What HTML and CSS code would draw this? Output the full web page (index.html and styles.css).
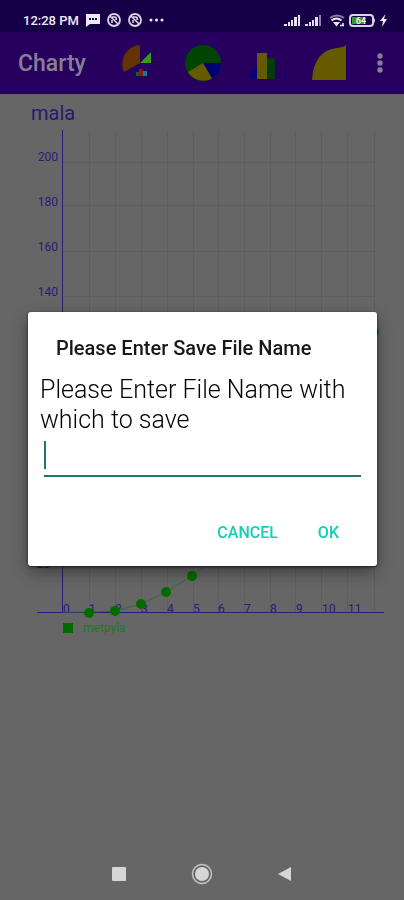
FILE: index.html
```
<!DOCTYPE html>
<html lang="en">
    <head>
        <meta charset="UTF-8">
        <meta name="viewport" content="width=device-width, initial-scale=1.0">
        <title>Charty</title>
        <link rel="stylesheet" href="styles.css">
    </head>
    <body>
        <div class="status-bar">
            <span class="clock">12:28 PM</span>
            <svg width="14" height="14" viewBox="0 0 14 14">
                <path d="M0 1h14v10H4l-4 3z" fill="#eeeaf5"/>
                <path d="M3 5h2v2H3zM6 5h2v2H6zM9 5h2v2H9z" fill="#160048"/>
            </svg>
            <svg width="14" height="14" viewBox="0 0 14 14" fill="none" stroke="#d9d3e8">
                <circle cx="7" cy="7" r="6" stroke-width="1.800"/>
                <path d="M3 3l8 8M5 10V7M5 4h3q2 1 1 3" stroke-width="1.600"/>
            </svg>
            <svg width="14" height="14" viewBox="0 0 14 14" fill="none" stroke="#d9d3e8">
                <circle cx="7" cy="7" r="6" stroke-width="1.800"/>
                <path d="M3 3l8 8M5 10V7M5 4h3q2 1 1 3" stroke-width="1.600"/>
            </svg>
            <svg width="15" height="14" viewBox="0 0 15 14" fill="#eeeaf5">
                <circle cx="2" cy="7" r="1.500"/>
                <circle cx="7.500" cy="7" r="1.500"/>
                <circle cx="13" cy="7" r="1.500"/>
            </svg>
            <div class="status-right">
                <svg width="17" height="13" viewBox="0 0 17 13" fill="#e4dff0">
                    <path d="M0 10h3v2H0zM4 8h2v4H4zM7 6h2v6H7zM10 3h3v9h-3zM14 1h2v11h-2z"/>
                </svg>
                <svg width="17" height="13" viewBox="0 0 17 13" fill="#e4dff0">
                    <path d="M0 10h3v2H0zM4 8h2v4H4zM7 6h2v6H7zM10 3h3v9h-3z"/>
                    <path d="M14 1h2v11h-2z" fill="#8d7fa8"/>
                </svg>
                <svg class="wifi" width="16" height="13" viewBox="0 0 16 13" fill="none" stroke="#eeeaf5">
                    <path d="M1 4q7-5 14 0" stroke="#8d7fa8" stroke-width="2"/>
                    <path d="M2.500 6.500q5-4 10 0" stroke-width="2"/>
                    <path d="M4 8h7l-3.500 4.500z" fill="#eeeaf5" stroke="none"/>
                    <path d="M11 11.500h4M14 9v3" stroke-width="1.500"/>
                </svg>
                <svg width="27" height="13" viewBox="0 0 27 13">
                    <rect x="1" y="1" width="23" height="11" rx="3" fill="none" stroke="#d9d3e8" stroke-width="2"/>
                    <path d="M25 4q2 2.500 0 5z" fill="#d9d3e8"/>
                    <rect x="3" y="3" width="13" height="7" fill="#379b20"/>
                    <text class="battery-text" x="12" y="10">64</text>
                </svg>
                <svg width="7" height="13" viewBox="0 0 7 13" fill="#eeeaf5">
                    <path d="M5.500 0L0 7h3l-1 6 5-8H4z"/>
                </svg>
            </div>
        </div>
        <header class="toolbar">
            <h1 class="app-name">Charty</h1>
            <div class="actions">
                <button class="action" aria-label="All charts">
                    <svg width="36" height="36" viewBox="0 0 36 36">
                        <path d="M18 0A19 19 0 0 0 2 27L18 18z" fill="#653300"/>
                        <path d="M18 18L29 7V18z" fill="#349b17"/>
                        <path d="M14 27h4v4h-4z" fill="#0c681f"/>
                        <path d="M17 24h4v7h-4z" fill="#8f1717"/>
                        <path d="M21 26h4v5h-4z" fill="#157a92"/>
                    </svg>
                </button>
                <button class="action" aria-label="Pie chart">
                    <svg width="36" height="36" viewBox="0 0 36 36">
                        <circle cx="18" cy="18" r="18" fill="#004400"/>
                        <path d="M18 18H36A18 18 0 0 1 27 33.600z" fill="#000074"/>
                        <path d="M18 18L27 33.600A18 18 0 0 1 3 27z" fill="#665a00"/>
                    </svg>
                </button>
                <button class="action" aria-label="Bar chart">
                    <svg width="36" height="36" viewBox="0 0 36 36">
                        <path d="M2 26l7-2v10H2z" fill="#06007a"/>
                        <path d="M9 8h10v26H9z" fill="#665a00"/>
                        <path d="M19 13h8v21h-8z" fill="#003c0c"/>
                    </svg>
                </button>
                <button class="action" aria-label="Area chart">
                    <svg width="36" height="36" viewBox="0 0 36 36">
                        <path d="M1 35Q3 5 26 3Q33 2 35 0V35z" fill="#665a00"/>
                    </svg>
                </button>
            </div>
            <button class="more" aria-label="More options">
                <svg width="6" height="22" viewBox="0 0 6 22" fill="#858090">
                    <circle cx="3" cy="4" r="2.700"/>
                    <circle cx="3" cy="11" r="2.700"/>
                    <circle cx="3" cy="18" r="2.700"/>
                </svg>
            </button>
        </header>
        <main class="content">
            <svg class="chart" viewBox="0 0 404 560" role="img" aria-label="mala">
                <text class="chart-title" x="31" y="26">mala</text>
                <path class="grid" d="M89.500 37V518M115.500 37V518M141.500 37V518M167.500 37V518M193.500 37V518M218.500 37V518M244.500 37V518M270.500 37V518M295.500 37V518M321.500 37V518M347.500 37V518M374.500 37V518"/>
                <path class="grid" d="M63 68.500H374M63 111.500H374M63 157.500H374M63 202.500H374M63 247.500H374M63 292.500H374M63 337.500H374M63 382.500H374M63 427.500H374M63 472.500H374"/>
                <path class="axis" d="M62.500 36V519M37 518.500H384"/>
                <g class="y-labels">
                    <text x="58" y="67">200</text>
                    <text x="58" y="112">180</text>
                    <text x="58" y="157">160</text>
                    <text x="58" y="202">140</text>
                    <text x="50" y="474">20</text>
                </g>
                <g class="x-labels">
                    <text x="63" y="519">0</text>
                    <text x="89" y="519">1</text>
                    <text x="115" y="519">2</text>
                    <text x="141" y="519">3</text>
                    <text x="167" y="519">4</text>
                    <text x="193" y="519">5</text>
                    <text x="218" y="519">6</text>
                    <text x="244" y="519">7</text>
                    <text x="270" y="519">8</text>
                    <text x="296" y="519">9</text>
                    <text x="322" y="519">10</text>
                    <text x="348" y="519">11</text>
                </g>
                <path class="series-line" d="M63 518L89 518L115 517L141 510L166 498L192 482L218 462L375 239"/>
                <g class="series">
                    <circle cx="89" cy="519" r="5"/>
                    <circle cx="115" cy="517" r="5"/>
                    <circle cx="141" cy="510" r="5"/>
                    <circle cx="166" cy="498" r="5"/>
                    <circle cx="192" cy="482" r="5"/>
                    <circle cx="374" cy="238" r="5"/>
                    <rect x="63" y="529" width="10" height="10"/>
                    <text class="legend" x="83" y="538">metpyla</text>
                </g>
            </svg>
        </main>
        <nav class="nav-bar">
            <button class="nav-btn" aria-label="Recent apps">
                <svg width="22" height="22" viewBox="0 0 22 22"><rect x="4" y="4" width="14" height="14" rx="1" fill="#d6d6d6"/></svg>
            </button>
            <button class="nav-btn" aria-label="Home">
                <svg width="22" height="22" viewBox="0 0 22 22">
                    <circle cx="11" cy="11" r="9.500" fill="none" stroke="#c4c4c4" stroke-width="1.500"/>
                    <circle cx="11" cy="11" r="7" fill="#d6d6d6"/>
                </svg>
            </button>
            <button class="nav-btn" aria-label="Back">
                <svg width="22" height="22" viewBox="0 0 22 22"><path d="M4 11L17 4V18z" fill="#d6d6d6"/></svg>
            </button>
        </nav>
        <div class="overlay">
            <form class="dialog" role="dialog" aria-labelledby="dialog-title">
                <h2 class="dialog-title" id="dialog-title">Please Enter Save File Name</h2>
                <label class="dialog-label" for="file-name">Please Enter File Name with which to save</label>
                <div class="field">
                    <span class="caret"></span>
                    <input class="file-name" id="file-name" type="text">
                </div>
                <div class="dialog-buttons">
                    <button class="btn" type="button">CANCEL</button>
                    <button class="btn" type="button">OK</button>
                </div>
            </form>
        </div>
    </body>
</html>
```

FILE: styles.css
```
* {
    box-sizing: border-box;
}

body {
    margin: 0;
    min-height: 100vh;
    display: flex;
    flex-direction: column;
    background-color: #666666;
    font-family: Roboto, "Liberation Sans", sans-serif;
}

button {
    padding: 0;
    border: none;
    background: none;
    font-family: inherit;
}

svg {
    display: block;
}

.status-bar {
    display: flex;
    align-items: center;
    gap: 7px;
    height: 32px;
    padding: 8px 17px 0 23px;
    background-color: #160048;
}

.clock {
    color: #eeeaf5;
    font-size: 13px;
    font-weight: 500;
}

.status-right {
    display: flex;
    align-items: center;
    gap: 4px;
    margin-left: auto;
}

.wifi {
    margin-left: 3px;
}

.battery-text {
    fill: #eeeaf5;
    font-size: 9px;
    font-weight: 700;
    text-anchor: middle;
}

.toolbar {
    display: flex;
    align-items: center;
    height: 62px;
    padding: 0 21px 0 18px;
    background-color: #27005f;
}

.app-name {
    margin: 0;
    color: #858090;
    font-size: 23px;
    font-weight: 500;
}

.actions {
    flex: 1;
    display: flex;
    justify-content: flex-end;
    gap: 27px;
    margin-right: 30px;
}

.content {
    flex: 1;
}

.chart {
    width: 100%;
    height: auto;
}

.chart-title {
    fill: #241a70;
    font-size: 20px;
}

.grid {
    fill: none;
    stroke: #5e5e5e;
}

.axis {
    fill: none;
    stroke: #2a1c78;
}

.y-labels,
.x-labels {
    fill: #2a1c78;
    font-size: 12px;
}

.y-labels {
    text-anchor: end;
}

.series {
    fill: #006c00;
}

.series-line {
    fill: none;
    stroke: #3c683c;
}

.legend {
    fill: #1f7a1f;
    font-size: 12px;
}

.nav-bar {
    display: flex;
    justify-content: center;
    align-items: center;
    gap: 61px;
    height: 52px;
}

.overlay {
    position: fixed;
    inset: 0;
    display: flex;
    align-items: center;
    justify-content: center;
    padding: 0 27px 22px 28px;
}

.dialog {
    width: 100%;
    max-width: 560px;
    padding: 24px 12px 14px;
    border-radius: 3px;
    background-color: #ffffff;
    box-shadow: 0 6px 16px rgba(0, 0, 0, 0.4), 0 1px 3px rgba(0, 0, 0, 0.6);
}

.dialog-title {
    margin: 0 16px 15px;
    color: #181818;
    font-size: 20px;
    font-weight: 500;
    line-height: 24px;
}

.dialog-label {
    display: block;
    color: #000000;
    font-size: 25px;
    font-weight: 300;
    line-height: 30px;
}

.field {
    display: flex;
    align-items: center;
    height: 42px;
    margin: 0 4px;
    border-bottom: 2px solid #1d7a62;
}

.caret {
    width: 2px;
    height: 28px;
    background-color: #1d7a62;
}

.file-name {
    flex: 1;
    min-width: 0;
    height: 100%;
    padding: 0;
    border: none;
    outline: none;
    background: none;
    font-family: inherit;
    font-size: 25px;
}

.dialog-buttons {
    display: flex;
    justify-content: flex-end;
    gap: 8px;
    margin: 35px 10px 0 0;
}

.btn {
    height: 40px;
    padding: 0 16px;
    color: #16cdb5;
    font-size: 16px;
    font-weight: 500;
}
```
